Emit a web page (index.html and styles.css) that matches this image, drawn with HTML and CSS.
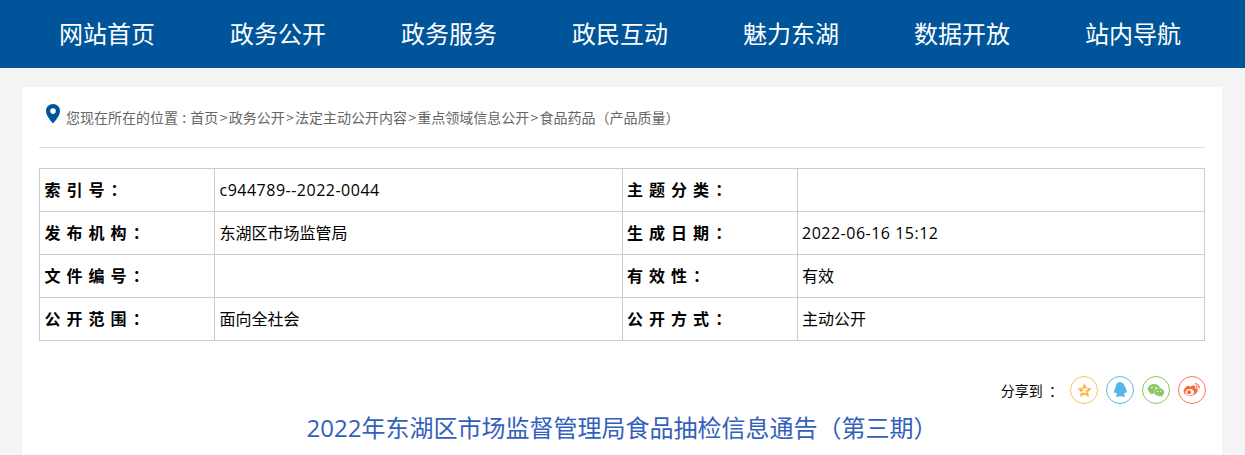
FILE: index.html
```html
<!DOCTYPE html>
<html lang="zh-CN">
<head>
<meta charset="utf-8">
<title>2022年东湖区市场监督管理局食品抽检信息通告（第三期）</title>
<link rel="stylesheet" href="styles.css">
</head>
<body>
<nav class="nav">
  <a class="nav-item">网站首页</a>
  <a class="nav-item">政务公开</a>
  <a class="nav-item">政务服务</a>
  <a class="nav-item">政民互动</a>
  <a class="nav-item">魅力东湖</a>
  <a class="nav-item">数据开放</a>
  <a class="nav-item">站内导航</a>
</nav>
<main class="card">
  <div class="crumbs">
    <svg class="pin" width="14" height="20" viewBox="0 0 14 20"><path fill="#00559a" fill-rule="evenodd" d="M7 0C3 0 0 3 0 7c0 4.500 4.500 9.500 7 12.500C9.500 16.500 14 11.500 14 7c0-4-3-7-7-7zm0 4.300a2.800 2.800 0 1 1 0 5.600 2.800 2.800 0 0 1 0-5.600z"/></svg>
    <span class="crumb-text">您现在所在的位置 : 首页<span class="sep">&gt;</span>政务公开<span class="sep">&gt;</span>法定主动公开内容<span class="sep">&gt;</span>重点领域信息公开<span class="sep">&gt;</span>食品药品（产品质量）</span>
  </div>
  <table class="meta">
    <colgroup><col class="c-label"><col class="c-value"><col class="c-label"><col class="c-value"></colgroup>
    <tr><th>索 引 号 ：</th><td><span class="num">c944789--2022-0044</span></td><th>主 题 分 类 ：</th><td></td></tr>
    <tr><th>发 布 机 构 ：</th><td>东湖区市场监管局</td><th>生 成 日 期 ：</th><td><span class="num">2022-06-16 15:12</span></td></tr>
    <tr><th>文 件 编 号 ：</th><td></td><th>有 效 性 ：</th><td>有效</td></tr>
    <tr><th>公 开 范 围 ：</th><td>面向全社会</td><th>公 开 方 式 ：</th><td>主动公开</td></tr>
  </table>
  <div class="share">
    <span class="share-label">分享到 ：</span>
    <span class="share-icon ring-y"><svg width="17" height="17" viewBox="0 0 20 20"><path fill="#fdb54a" d="M10 1.500l2.600 5.400 5.900.8-4.300 4.100 1.100 5.900L10 14.900l-5.300 2.800 1.100-5.900L1.500 7.700l5.900-.8z"/><path fill="none" stroke="#fff" stroke-width="1.500" d="M7.500 8.500h5l-5 3.500h5"/></svg></span>
    <span class="share-icon ring-b"><svg width="16" height="18" viewBox="0 0 18 20"><path fill="#56b6ec" d="M9 1C5.700 1 4.300 3.500 4.200 6.500 3 8.500 2 11 2.500 13.500c.6.500 1.300-.5 1.700-1.300.3 1.300 1 2.300 1.700 3-1 .4-1.900 1-1.600 1.800.4.800 2.500.7 4.700.1.100 0 .6 0 1 0 2.200.6 4.300.7 4.700-.1.300-.8-.6-1.400-1.600-1.800.7-.7 1.400-1.700 1.700-3 .4.800 1.100 1.800 1.700 1.300.5-2.500-.5-5-1.700-7C13.700 3.500 12.300 1 9 1z"/></svg></span>
    <span class="share-icon ring-g"><svg width="18" height="15" viewBox="0 0 22 18"><path fill="#8cc760" d="M8.500 1C4.400 1 1 3.700 1 7c0 1.900 1.100 3.600 2.900 4.700L3.200 14l2.600-1.400c.8.200 1.700.4 2.700.4h.6c-.2-.6-.3-1.200-.3-1.800 0-3.100 3-5.600 6.700-5.600h.6C15 3 12 1 8.500 1z"/><path fill="#8cc760" d="M21 11.200c0-2.700-2.800-4.800-6-4.800s-6 2.100-6 4.800 2.800 4.800 6 4.800c.7 0 1.400-.1 2-.3l2 1.100-.5-1.800c1.500-.9 2.500-2.200 2.500-3.800z"/><circle cx="6" cy="5.500" r="1" fill="#fff"/><circle cx="11" cy="5.500" r="1" fill="#fff"/><circle cx="13" cy="10" r=".8" fill="#fff"/><circle cx="17" cy="10" r=".8" fill="#fff"/></svg></span>
    <span class="share-icon ring-o"><svg width="20" height="16" viewBox="0 0 22 18"><path fill="#f9683c" fill-rule="evenodd" d="M9 5.500C11 3.800 13 3.500 14 4.500c.6.700.5 1.700.1 2.700 1.700-.4 3.300.2 3.300 2 0 3-3.900 6.300-8.400 6.300C5 15.500 1.500 13.600 1.500 10.500c0-1.800 1.300-3.700 3.200-5.500C6 4 8 4 9 5.500zM8.500 8C5.700 8 3.500 9.600 3.500 11.500S5.700 15 8.500 15s5-1.600 5-3.500S11.300 8 8.500 8z"/><circle cx="7.700" cy="11.600" r="2.200" fill="#f9683c"/><path fill="none" stroke="#f9683c" stroke-width="1.300" stroke-linecap="round" d="M14.500 2c2.500-.3 5 1.800 4.500 5M14.800 4.500c1.300-.2 2 .7 1.900 1.900"/></svg></span>
  </div>
  <h1 class="title">2022年东湖区市场监督管理局食品抽检信息通告（第三期）</h1>
</main>
</body>
</html>
```
FILE: styles.css
```css
html, body {
  margin: 0;
  padding: 0;
  height: 455px;
  overflow: hidden;
  background: #f4f4f4;
  font-family: "Noto Sans CJK SC", "Liberation Sans", sans-serif;
  color: #000;
}
.nav {
  display: flex;
  height: 68px;
  padding-left: 21.5px;
  background: #00559a;
}
.nav-item {
  width: 171px;
  text-align: center;
  font-size: 24px;
  line-height: 66px;
  color: #fff;
}
.card {
  box-sizing: border-box;
  width: 1200px;
  height: 368px;
  margin: 19px 0 0 22px;
  padding: 0 17px;
  background: #fff;
}
.crumbs {
  display: flex;
  align-items: flex-start;
  height: 60px;
  border-bottom: 1px solid #ddd;
}
.pin {
  margin: 17px 0 0 7px;
}
.crumb-text {
  margin: 20px 0 0 6px;
  font-size: 14px;
  line-height: 20px;
  color: #666;
  word-spacing: 1.1px;
}
.sep {
  padding: 0 1.25px;
}
.meta {
  width: 1166px;
  margin-top: 20px;
  border-collapse: collapse;
  table-layout: fixed;
  font-size: 16px;
}
.c-label { width: 175px; }
.meta th, .meta td {
  height: 43px;
  padding: 0 0 2px 4.5px;
  border: 1px solid #ccc;
  text-align: left;
  box-sizing: border-box;
}
.meta th {
  font-weight: 700;
  word-spacing: 2.4px;
}
.meta td { font-weight: 400; }
.num {
  font-family: "Open Sans", sans-serif;
  letter-spacing: 0.5px;
}
.share {
  display: flex;
  align-items: center;
  justify-content: flex-end;
  gap: 8px;
  margin: 35px -1px 0 0;
  height: 28px;
  font-size: 14px;
}
.share-label {
  margin-right: -1px;
  word-spacing: 3px;
}
.share-icon {
  box-sizing: border-box;
  display: flex;
  align-items: center;
  justify-content: center;
  width: 28px;
  height: 28px;
  border: 1px solid;
  border-radius: 50%;
}
.ring-y { border-color: #fdc35f; }
.ring-b { border-color: #5ab8ec; }
.ring-g { border-color: #8cc760; }
.ring-o { border-color: #f9784c; }
.title {
  margin: 6px 0 0;
  text-align: center;
  font-family: "Open Sans", "Noto Sans CJK SC", sans-serif;
  font-size: 24px;
  line-height: 36px;
  font-weight: 400;
  color: #3360bd;
}
```
